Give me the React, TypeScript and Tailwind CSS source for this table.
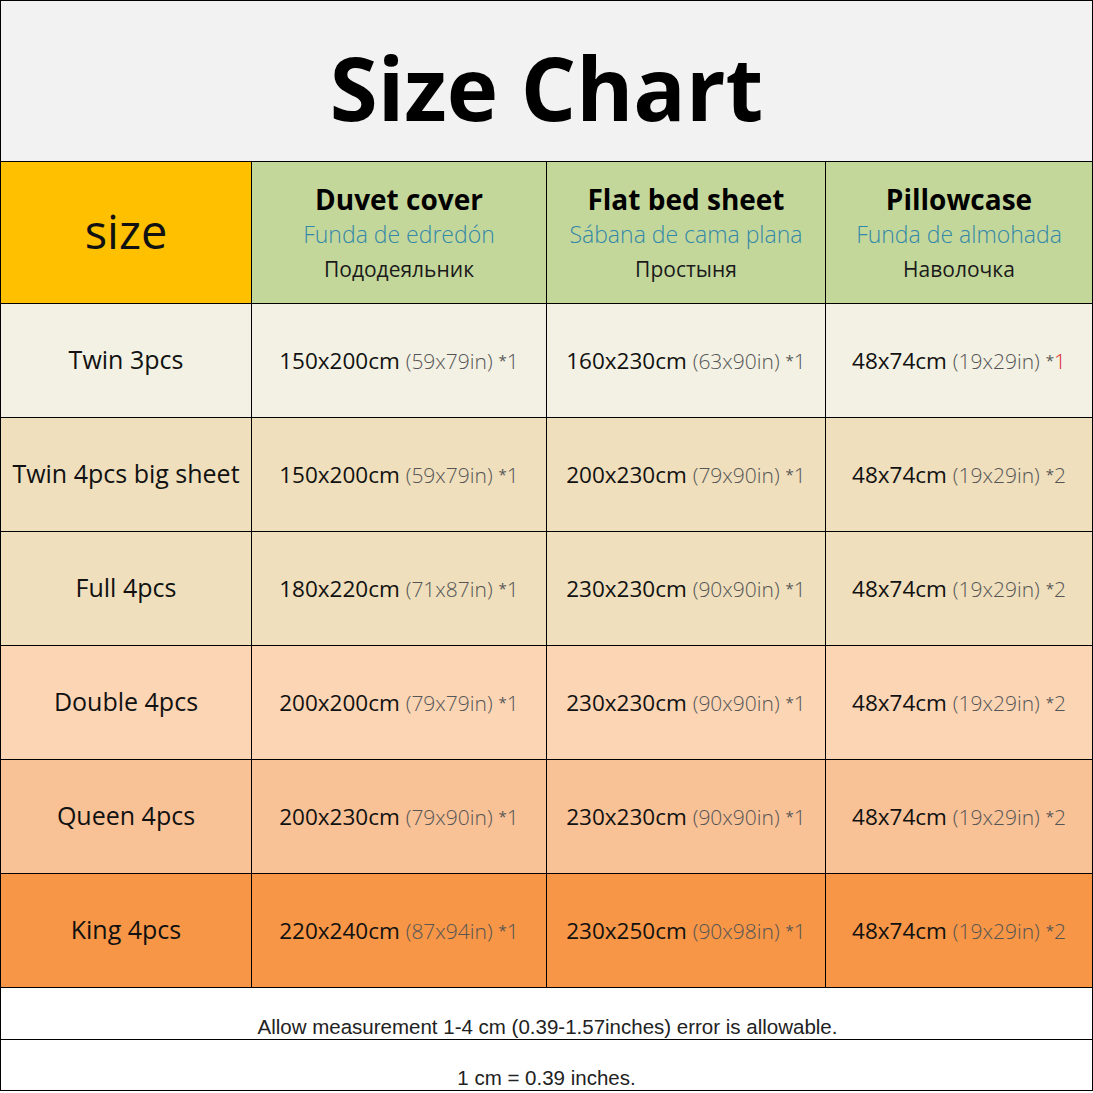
import React from "react";

type Row = {
  label: string;
  bg: string;
  cells: { main: string; inch: string; qty: string; red?: boolean }[];
};

const rows: Row[] = [
  {
    label: "Twin 3pcs",
    bg: "bg-[#f3f1e3]",
    cells: [
      { main: "150x200cm", inch: "(59x79in)", qty: "1" },
      { main: "160x230cm", inch: "(63x90in)", qty: "1" },
      { main: "48x74cm", inch: "(19x29in)", qty: "1", red: true },
    ],
  },
  {
    label: "Twin 4pcs big sheet",
    bg: "bg-[#efdfbd]",
    cells: [
      { main: "150x200cm", inch: "(59x79in)", qty: "1" },
      { main: "200x230cm", inch: "(79x90in)", qty: "1" },
      { main: "48x74cm", inch: "(19x29in)", qty: "2" },
    ],
  },
  {
    label: "Full 4pcs",
    bg: "bg-[#efdfbd]",
    cells: [
      { main: "180x220cm", inch: "(71x87in)", qty: "1" },
      { main: "230x230cm", inch: "(90x90in)", qty: "1" },
      { main: "48x74cm", inch: "(19x29in)", qty: "2" },
    ],
  },
  {
    label: "Double 4pcs",
    bg: "bg-[#fcd5b5]",
    cells: [
      { main: "200x200cm", inch: "(79x79in)", qty: "1" },
      { main: "230x230cm", inch: "(90x90in)", qty: "1" },
      { main: "48x74cm", inch: "(19x29in)", qty: "2" },
    ],
  },
  {
    label: "Queen 4pcs",
    bg: "bg-[#f9c196]",
    cells: [
      { main: "200x230cm", inch: "(79x90in)", qty: "1" },
      { main: "230x230cm", inch: "(90x90in)", qty: "1" },
      { main: "48x74cm", inch: "(19x29in)", qty: "2" },
    ],
  },
  {
    label: "King 4pcs",
    bg: "bg-[#f79646]",
    cells: [
      { main: "220x240cm", inch: "(87x94in)", qty: "1" },
      { main: "230x250cm", inch: "(90x98in)", qty: "1" },
      { main: "48x74cm", inch: "(19x29in)", qty: "2" },
    ],
  },
];

const heads = [
  { en: "Duvet cover", es: "Funda de edredón", ru: "Пододеяльник" },
  { en: "Flat bed sheet", es: "Sábana de cama plana", ru: "Простыня" },
  { en: "Pillowcase", es: "Funda de almohada", ru: "Наволочка" },
];

const cell = "border-r border-b border-black flex items-center justify-center";

export default function App() {
  return (
    <div className="w-[1093px] h-[1093px] bg-white font-['Open_Sans',sans-serif] text-[#111]">
      <div className="grid grid-cols-[251px_295px_279px_267px] border-l border-t border-black">
        <div className={`col-span-4 h-[161px] bg-[#f2f2f2] ${cell}`}>
          <h1 className="text-[87px] font-bold leading-none pt-[12px] text-black">Size Chart</h1>
        </div>

        <div className={`h-[142px] bg-[#ffc000] ${cell}`}>
          <span className="text-[47px] leading-none pb-[2px]">size</span>
        </div>
        {heads.map((h) => (
          <div key={h.en} className={`h-[142px] bg-[#c4d79b] flex-col pt-[2px] ${cell}`}>
            <div className="text-[28px] font-bold leading-[34px] text-black">{h.en}</div>
            <div className="text-[23px] font-light leading-[36px] text-[#3288a8]">{h.es}</div>
            <div className="text-[21px] leading-[34px] text-[#1a1a1a]">{h.ru}</div>
          </div>
        ))}

        {rows.map((r) => (
          <React.Fragment key={r.label}>
            <div className={`h-[114px] ${r.bg} ${cell}`}>
              <span className="text-[25px] pb-[2px]">{r.label}</span>
            </div>
            {r.cells.map((c, i) => (
              <div key={i} className={`h-[114px] ${r.bg} ${cell}`}>
                <span className="text-[22.5px] whitespace-nowrap">
                  {c.main}{" "}
                  <span className="text-[21px] font-light text-[#555]">{c.inch}</span>{" "}
                  <span className="text-[15px] text-[#555] align-[3px]">*</span>
                  <span className={`text-[21px] font-light ${c.red ? "text-[#e0282e]" : "text-[#555]"}`}>{c.qty}</span>
                </span>
              </div>
            ))}
          </React.Fragment>
        ))}

        <div className="col-span-4 h-[52px] border-r border-b border-black flex items-end justify-center">
          <span className="font-['Liberation_Sans',sans-serif] text-[20.5px] leading-[24px] pl-[2px] text-[#222]">
            Allow measurement 1-4 cm (0.39-1.57inches) error is allowable.
          </span>
        </div>
        <div className="col-span-4 h-[51px] border-r border-b border-black flex items-end justify-center">
          <span className="font-['Liberation_Sans',sans-serif] text-[20.5px] leading-[24px] text-[#222]">
            1 cm = 0.39 inches.
          </span>
        </div>
      </div>
    </div>
  );
}
